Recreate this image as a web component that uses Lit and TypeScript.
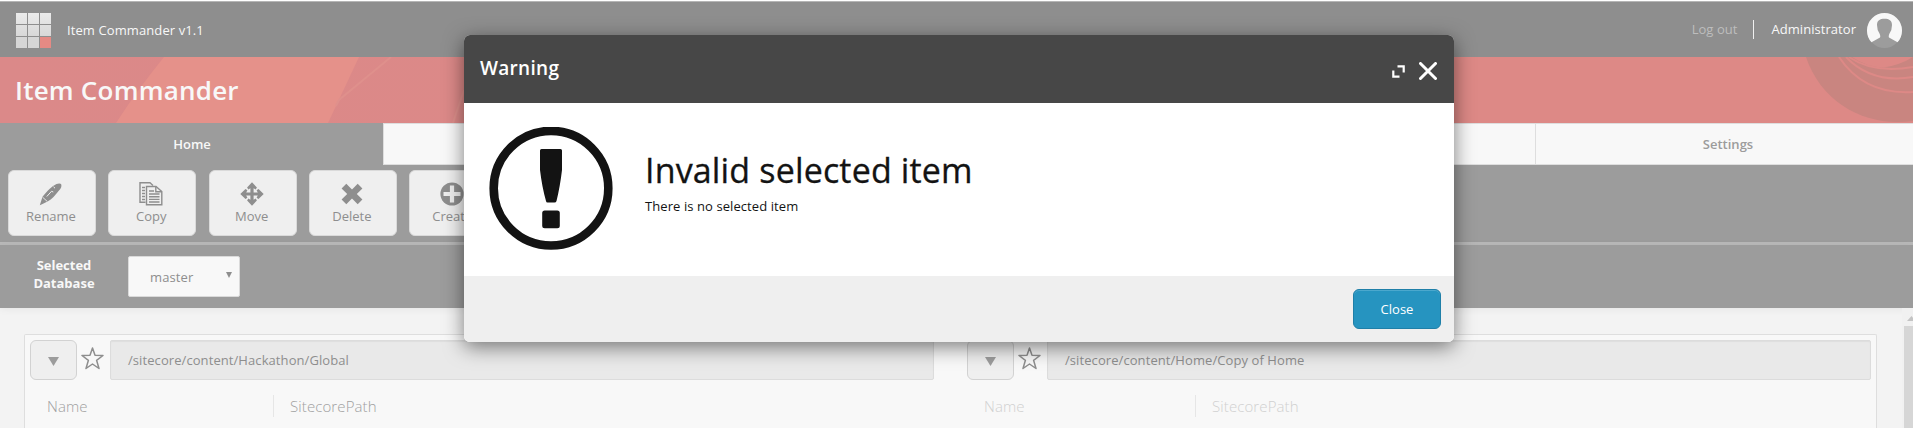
import { LitElement, html, css, svg } from "lit";
import { customElement } from "lit/decorators.js";

const icons: Record<string, unknown> = {
  Rename: svg`<g fill="#8e8e8e"><path d="M.8 23.200L3.500 14.800C8 9 13 4 17.500 2Q21.500 .8 22.300 2.600 23 5.500 20 8.500C16.500 13 12.500 17.500 9 19.200L3 22.200Z"/><path d="M3.600 15.200L8.200 19.400" stroke="#efefef" stroke-width=".9"/><path d="M7.800 14.500L12.500 9.300 14.300 10M14.500 4.800L16 6.200" fill="none" stroke="#efefef" stroke-width="1"/></g>`,
  Copy: svg`<g fill="none" stroke="#8e8e8e" stroke-width="1.4"><path d="M6.500 20.300H1V.8H11L14 3.500"/><path d="M3 5.500H6M3 8.500H6M3 11.500H6M3 14.500H6M3 17.500H6"/><path d="M7.500 4.500H17L22.800 9.500V22.800H7.500Z" fill="#efefef"/><path d="M16.800 4.500V9.800H22.800M10 9H15M10 12H20.500M10 14.700H20.500M10 17.400H20.500M10 20H20.500"/></g>`,
  Move: svg`<path fill="#8e8e8e" d="M12 .3L16.900 5.500 15.700 7.400 13.600 6.200V10.400H17.800L16.600 8.300 18.500 7.100 23.700 12 18.500 16.900 16.600 15.700 17.800 13.600H13.600V17.800L15.700 16.600 16.900 18.500 12 23.700 7.100 18.500 8.300 16.600 10.400 17.800V13.600H6.200L7.400 15.700 5.500 16.900 .3 12 5.500 7.100 7.400 8.300 6.200 10.400H10.400V6.200L8.300 7.400 7.100 5.500Z"/>`,
  Delete: svg`<path fill="#8e8e8e" d="M6.300 1.800L12 7.500 17.700 1.800 22.400 6.400 16.800 12 22.400 17.600 17.700 22.200 12 16.500 6.300 22.200 1.600 17.600 7.200 12 1.600 6.400Z"/>`,
  Create: svg`<circle cx="12" cy="12" r="11.600" fill="#8e8e8e"/><path fill="#efefef" d="M9.900 3.500H14.100V9.900H20.500V14.100H14.100V20.500H9.900V14.100H3.500V9.900H9.900Z"/>`,
};

@customElement("app-root")
export class AppRoot extends LitElement {
  static styles = css`
    :host { display: block; position: relative; width: 100%; height: 428px; overflow: hidden; background: #f3f3f3; font: 13px/18px "Open Sans", sans-serif; color: #8e8e8e; }
    * { box-sizing: border-box; }
    svg { display: block; flex: none; }
    .top { height: 57px; border-top: 1px solid #fff; background: #8e8e8e; display: flex; align-items: center; padding: 0 11px 0 16px; color: #f8f8f8; box-shadow: inset 0 1px #b5b5b5; }
    .logo { width: 35px; height: 35px; display: grid; grid-template-columns: repeat(3, 11px); grid-auto-rows: 11px; gap: 1px; margin-top: 2px; }
    .cell { background: linear-gradient(#ebebeb, #e2e2e2); }
    .cell.mid { background: linear-gradient(#e0e0e0, #d8d8d8); }
    .cell.low { background: #d6d6d6; }
    .cell.red { background: #e58a84; }
    .name { margin-left: 16px; padding-top: 1px; flex: 1; letter-spacing: .1px; }
    .logout { color: #bdbdbd; padding-top: 0; letter-spacing: .05px; }
    .bar { width: 1px; height: 19px; background: #f0f0f0; margin: 1px 17px 0 16px; }
    .admin { letter-spacing: .05px; }
    .avatar { margin: 2px 0 0 11px; }
    .banner { height: 66px; display: grid; overflow: hidden; background: linear-gradient(90deg, #db8989, #dd8986 70%); }
    .banner > * { grid-area: 1 / 1; }
    .art { justify-self: start; }
    .art.end { justify-self: end; }
    h1 { margin: 0; padding: 0 15px; font-size: 26px; line-height: 66px; font-weight: 600; color: #f8f8f8; letter-spacing: .22px; }
    .tabs { display: grid; grid-template-columns: repeat(5, 384px); height: 42px; }
    .tab { border: solid #dedede; border-width: 1px 0 1px 1px; background: #f8f8f8; color: #9c9c9c; font-weight: 600; text-align: center; line-height: 40px; margin-left: -1px; }
    .tab.on { background: #9c9c9c; border-color: #9c9c9c; color: #f8f8f8; margin: 0 1px 0 0; }
    .tools { background: #9c9c9c; height: 80px; padding: 5px 8px; border-bottom: 3px solid #b9b9b9; display: flex; gap: 12.3px; }
    .tool { flex: none; width: 88px; height: 66px; border: 1px solid #dadada; border-radius: 6px; background: #efefef; display: flex; flex-direction: column; align-items: center; padding: 11px 2px 0 0; line-height: 18px; gap: 1px; }
    .db { background: #9c9c9c; height: 63px; padding: 11px 0 0 28px; display: flex; gap: 28px; box-shadow: 0 1px 8px rgba(0,0,0,.06); }
    .label { width: 72px; text-align: center; font-weight: 700; color: #f8f8f8; }
    .select { width: 112px; height: 41px; background: #f8f8f8; border: 1px solid #dadada; border-radius: 2px; padding: 0 7px 0 21px; display: flex; align-items: center; justify-content: space-between; letter-spacing: .1px; }
    .select span { padding-top: 1px; }
    .select svg { margin-top: -3px; }
    .main { display: flex; justify-content: space-between; height: 120px; }
    .panel { width: 1853px; margin: 26px 0 0 24px; border: 1px solid #dedede; border-bottom: 0; border-radius: 2px 2px 0 0; background: #f8f8f8; display: grid; grid-template-columns: 904px 904px; column-gap: 33px; padding: 5px; }
    .path { display: flex; height: 40px; }
    .drop { width: 47px; border: 1px solid #d2d2d2; border-radius: 6px; background: #efefef; display: grid; place-items: center; padding-top: 2px; }
    .star { margin: 7px 6px 0 4px; }
    .input { flex: 1; background: #e9e9e9; border: 1px solid #dcdcdc; border-radius: 2px; padding-left: 17px; line-height: 39px; box-shadow: inset 0 1px 1px #dedede; letter-spacing: .08px; }
    .cols { display: flex; font-size: 15px; line-height: 22px; color: #a0a0a0; font-weight: 300; padding: 15px 0 0 17px; letter-spacing: .1px; }
    .cols.faded { color: #d0d0d0; }
    .first { width: 227px; border-right: 1px solid #e6e6e6; margin-right: 16px; }
    .faded .first { width: 212px; }
    .scroll { width: 11px; background: #f1f1f1; padding-left: 2px; display: flex; flex-direction: column; overflow: hidden; }
    .up { margin: 8px 0 5px 3px; }
    .thumb { flex: 1; background: #d6d6d6; }
    .modal { position: absolute; left: 464px; top: 35px; width: 990px; height: 307px; border-radius: 6px; overflow: hidden; background: #fff; color: #131313; display: grid; grid-template-rows: 68px 173px 66px; }
    .shade { position: absolute; left: 464px; top: 35px; width: 990px; height: 307px; border-radius: 6px; box-shadow: 0 5px 20px rgba(0,0,0,.5); }
    .head { background: #474747; display: flex; align-items: center; padding: 0 17px 0 16px; }
    h2 { margin: -2px 0 0; flex: 1; font-size: 19px; line-height: 24px; color: #fff; font-weight: 600; letter-spacing: .3px; }
    .close { margin: 4px 0 0 14px; }
    .expand { margin-top: 4px; }
    .body { display: flex; padding: 24px 25px; }
    .msg { padding: 19px 0 0 32px; }
    h3 { margin: 0; font-size: 34px; line-height: 48px; font-weight: 400; letter-spacing: .16px; -webkit-text-stroke: .3px #131313; }
    p { margin: 3px 0 0; letter-spacing: .08px; }
    .foot { background: #efefef; display: flex; justify-content: flex-end; padding: 13px; }
    .ok { width: 88px; height: 40px; border: 1px solid #1f7fa8; border-radius: 6px; background: #2694c0; box-shadow: inset 0 1px #4ba8cd; color: #fff; text-align: center; font: inherit; padding: 0; }
  `;

  pane(path: string, faded: boolean) {
    return html`<div>
      <div class="path">
        <div class="drop"><svg width="11" height="9" viewBox="0 0 11 9"><path d="M0 0H11L5.5 9Z" fill="#9c9c9c"/></svg></div>
        <svg class="star" width="23" height="23" viewBox="0 0 23 23"><path d="M11.5 1L14 8.3 22 8.5 15.6 13.3 18 21.5 11.5 17 5 21.5 7.4 13.3 1 8.5 9 8.3Z" fill="none" stroke="#8e8e8e" stroke-width="1.5" stroke-linejoin="round"/></svg>
        <div class="input">${path}</div>
      </div>
      <div class="cols ${faded ? "faded" : ""}"><div class="first">Name</div><div>SitecorePath</div></div>
    </div>`;
  }

  render() {
    return html`
      <header class="top">
        <div class="logo">${["", "", "", "mid", "mid", "mid", "low", "low", "red"].map((c) => html`<div class="cell ${c}"></div>`)}</div>
        <div class="name">Item Commander v1.1</div>
        <div class="logout">Log out</div><div class="bar"></div><div class="admin">Administrator</div>
        <svg class="avatar" width="35" height="35" viewBox="0 0 35 35"><circle cx="17.5" cy="17.5" r="17.5" fill="#9c9c9c"/><path d="M4.500 29.300A17.500 17.500 0 1 1 30.500 29.300L22 24.500Q21.300 23 22.500 20.500 25 17 25 12C25 7.500 22 5.800 17.500 5.800S10 7.500 10 12Q10 17 12.500 20.500 13.700 23 13 24.500Z" fill="#f8f8f8"/></svg>
      </header>
      <div class="banner">
        <svg class="art" width="480" height="66" viewBox="0 0 480 66"><path d="M164 0H359L328 66H116Q138 32 164 0Z" fill="#e5918a"/><path d="M391 0L339 43 336 49M464 33L453 66" stroke="#df908c" stroke-width="2" fill="none"/></svg>
        <svg class="art end" width="113" height="66" viewBox="0 0 113 66"><path d="M6 0C20 42 58 65 97 65Q106 65 113 64V0Z" fill="#c98580"/><path d="M39 0Q64 38 113 35M46 0Q72 27 113 20M49 0Q74 17 113 10" fill="none" stroke="#dd8986" stroke-width="2"/><path d="M52 0H113Q100 8 84 10.500 66 10 52 0Z" fill="#dd8986"/></svg>
        <h1>Item Commander</h1>
      </div>
      <nav class="tabs"><div class="tab on">Home</div><div class="tab"></div><div class="tab"></div><div class="tab"></div><div class="tab">Settings</div></nav>
      <div class="tools">${Object.keys(icons).map((n) => html`<div class="tool"><svg width="24" height="24" viewBox="0 0 24 24">${icons[n]}</svg><span>${n}</span></div>`)}</div>
      <div class="db"><div class="label">Selected<br>Database</div>
        <div class="select"><span>master</span><svg width="6" height="6" viewBox="0 0 6 6"><path d="M0 0H6L3 6Z" fill="#8e8e8e"/></svg></div>
      </div>
      <div class="main">
        <div class="panel">${this.pane("/sitecore/content/Hackathon/Global", false)}${this.pane("/sitecore/content/Home/Copy of Home", true)}</div>
        <div class="scroll"><svg class="up" width="9" height="5" viewBox="0 0 9 5"><path d="M0 5L4.500 0 9 5Z" fill="#c4c4c4"/></svg><div class="thumb"></div></div>
      </div>
      <div class="shade"></div>
      <section class="modal">
        <div class="head"><h2>Warning</h2>
          <svg class="expand" width="13" height="13" viewBox="0 0 13 13"><path d="M5.500 1.300H11.700V7.500M1.300 5.500V11.700H7.500" fill="none" stroke="#fff" stroke-width="2.200"/></svg>
          <svg class="close" width="18" height="18" viewBox="0 0 18 18"><path d="M1.500 1.500L16.500 16.500M16.500 1.500L1.500 16.500" stroke="#fff" stroke-width="3" stroke-linecap="round"/></svg>
        </div>
        <div class="body">
          <svg width="124" height="124" viewBox="0 0 124 124"><circle cx="62" cy="61.200" r="57.300" fill="none" stroke="#131313" stroke-width="8.600"/><path d="M52.500 22H71.500Q73 22 73 23.500V43Q71 60 67.500 74Q67 75.500 65.500 75.500H58.500Q57.200 75.500 57 74Q53 60 51 43V23.500Q51 22 52.500 22Z" fill="#131313"/><rect x="53.200" y="83.500" width="17.600" height="17.700" rx="2.500" fill="#131313"/></svg>
          <div class="msg"><h3>Invalid selected item</h3><p>There is no selected item</p></div>
        </div>
        <div class="foot"><button class="ok">Close</button></div>
      </section>`;
  }
}
